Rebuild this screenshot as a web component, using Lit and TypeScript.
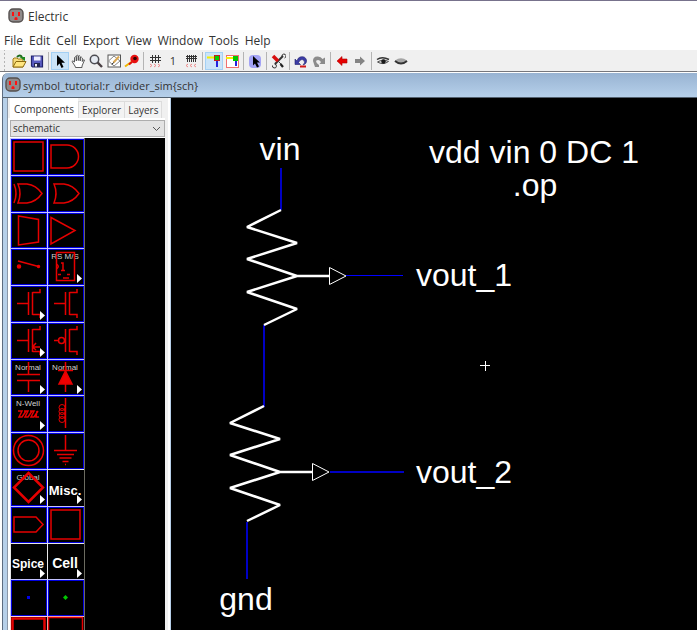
import { LitElement, html, svg, css } from "lit";
import { customElement } from "lit/decorators.js";
import { classMap } from "lit/directives/class-map.js";

const outlet = svg`
  <rect x="1" y="1" width="14" height="13" rx="4" fill="#8f8a8a" stroke="#55504f" stroke-width="1.4"/>
  <rect x="4" y="4" width="2" height="4" fill="#f11"/><rect x="10" y="4" width="2" height="4" fill="#f11"/>
  <path d="M6.500 12v-1.500a1.500 1.500 0 0 1 3 0v1.500z" fill="#f11"/>`;

const icons = {
  open: svg`<path d="M2 6V14H12V6H7L6 5H3Z" fill="#f6dc7c" stroke="#a07c1c"/><path d="M2 14L5 8.500H15L12 14Z" fill="#ffe680" stroke="#8c6a10"/><path d="M6 4Q9 1 11 4" fill="none" stroke="#1c6b1c" stroke-width="2"/><path d="M8.500 4H14V8Z" fill="#1f8a1f"/>`,
  save: svg`<path d="M2.500 3H13.500V14H3.500L2.500 13Z" fill="#5a5cc0" stroke="#22246c" stroke-width="1.200"/><rect x="5" y="3.500" width="6.500" height="4" fill="#eef"/><rect x="5" y="10" width="6" height="4" fill="#23254f"/><rect x="6" y="11" width="2" height="2.500" fill="#eee"/>`,
  select: svg`<path d="M5 2V13L7.500 10.500L9.500 15L11.500 14L9.500 9.800H13Z" fill="#000"/>`,
  hand: svg`<path d="M5 13L2 8.500Q2.500 7 4.500 9V4.500Q5.500 3 6.300 4.500V8V2.800Q7.300 1.500 8.300 3V7.500V3Q9.300 2 10.200 3.500V8V4.500Q11.500 3.500 12.300 5V8.500Q13 6 14.500 7L12 13V14.500H5.500Z" fill="#fff" stroke="#4a4a4a" stroke-width=".9"/>`,
  zoom: svg`<circle cx="6.500" cy="6.500" r="4.200" fill="#e6ebf2" stroke="#4c4c52" stroke-width="1.500"/><path d="M9.700 9.700L14 14" stroke="#4a4044" stroke-width="2.400"/>`,
  outline: svg`<rect x="2" y="2" width="12.500" height="12" fill="#fff" stroke="#555"/><path d="M2.500 8L8 3L14 8L8 13Z" fill="#fff" stroke="#888"/><path d="M7.500 9.500L13 3.500" stroke="#d9a650" stroke-width="2"/><path d="M6 11.500L7.500 9.500" stroke="#000"/>`,
  measure: svg`<path d="M1 13.500L8 8.500" stroke="#efb800" stroke-width="2"/><circle cx="10.500" cy="6" r="4.200" fill="#e81010"/><circle cx="11" cy="5.500" r="1.800" fill="#300"/><path d="M5 11.500L8 9" stroke="#e01010" stroke-width="2"/>`,
  gridCoarse: svg`<path d="M5.500 2V10M8.500 2V10M11.500 2V10M3 4.500H14M3 7.500H14" stroke="#333" fill="none"/><path d="M3 11l2 1.500l-2 1.500M7 11l2 1.500l-2 1.500M11 11l2 1.500l-2 1.500" stroke="#e88" fill="none"/>`,
  gridFine: svg`<path d="M4.500 2V9M6.500 2V9M8.500 2V9M10.500 2V9M12.500 2V9M3 3.500H14M3 5.500H14" stroke="#333" fill="none"/><path d="M5 11l-2 1.500l2 1.500M9 11l-2 1.500l2 1.500M13 11l-2 1.500l2 1.500" stroke="#e88" fill="none"/>`,
  port: svg`<path d="M1 4.500H8" stroke="#f5ee00" stroke-width="2"/><path d="M11 8V14" stroke="#2222e0" stroke-width="2"/><rect x="8.500" y="2.500" width="5" height="5" fill="#00d000" stroke="#c02020"/>`,
  area: svg`<rect x="2.500" y="2.500" width="12" height="12" fill="#fff" stroke="#f07070"/><path d="M2 5H9" stroke="#f5ee00" stroke-width="2"/><path d="M12 8V13" stroke="#2222e0" stroke-width="2"/><rect x="9" y="3" width="5" height="5" fill="#00c800"/>`,
  special: svg`<rect x="2" y="2" width="12" height="13" rx="4" fill="#a3a3f5"/><path d="M6 3V12.500L8 10.500L10 14.500L12 13.500L10 9.500H13Z" fill="#000"/>`,
  tools: svg`<path d="M5 11L13 3" stroke="#333" stroke-width="2"/><path d="M4.500 11A2 2 0 1 1 2.500 12.500M12 3.500A2 2 0 1 1 14.500 5" fill="none" stroke="#333"/><path d="M3 3L8 8" stroke="#d81010" stroke-width="3.500"/><path d="M8 8L11 11" stroke="#444"/><path d="M10.500 11L13 14" stroke="#222" stroke-width="2.200"/>`,
  undo: svg`<path d="M2 6V11.500H7.500L5.500 9.500Q8 5 11 7.500Q12.500 9.500 10 12Q14 11 13.500 7Q12 2.500 7 4Q4.500 5 4 8Z" fill="#3b3ba6" stroke="#23236d" stroke-width=".6"/><path d="M7 13.500H13" stroke="#d01818" stroke-width="2"/>`,
  redo: svg`<path d="M2 8Q2 3 7 3.500Q10 3.800 11.500 6L14 4.500V11H8.500L10 9Q7.500 5.500 5 8Q5 10 8 12V14H4Q3 11 2 8Z" fill="#8c8c8c"/>`,
  back: svg`<path d="M3 8L8 3.500V6H13V10H8V12.500Z" fill="#e60000" stroke="#b00000" stroke-width=".6"/>`,
  forward: svg`<path d="M13 8L8 3.500V6H3V10H8V12.500Z" fill="#858585"/>`,
  eyeOpen: svg`<path d="M2 6.500Q7 3 14 6.500" fill="none" stroke="#333" stroke-width="1.500"/><path d="M2.500 9Q8 12.500 13.500 8.500Q8 5.500 2.500 9Z" fill="#ccc" stroke="#555"/><circle cx="8.500" cy="8.500" r="2.200" fill="#181818"/>`,
  eyeShut: svg`<path d="M2 7.500Q8 3 14 7.500Q12 11 8 11Q4 11 2 7.500Z" fill="#a5a5a5"/><path d="M2 8Q8 13 14 8" fill="none" stroke="#333" stroke-width="2"/>`,
};

type Tool = { label: string; icon?: unknown; on?: boolean };

const toolGroups: Tool[][] = [
  [{ label: "Open library", icon: icons.open }, { label: "Save library", icon: icons.save }],
  [
    { label: "Click, zoom, wire", icon: icons.select, on: true },
    { label: "Pan", icon: icons.hand },
    { label: "Zoom", icon: icons.zoom },
    { label: "Outline edit", icon: icons.outline },
    { label: "Measure", icon: icons.measure },
  ],
  [{ label: "Coarser grid", icon: icons.gridCoarse }, { label: "1" }, { label: "Finer grid", icon: icons.gridFine }],
  [{ label: "Select objects", icon: icons.port, on: true }, { label: "Select area", icon: icons.area }],
  [{ label: "Special select", icon: icons.special }],
  [{ label: "Preferences", icon: icons.tools }],
  [{ label: "Undo", icon: icons.undo }, { label: "Redo", icon: icons.redo }],
  [{ label: "Back", icon: icons.back }, { label: "Forward", icon: icons.forward }],
  [{ label: "Expand", icon: icons.eyeOpen }, { label: "Unexpand", icon: icons.eyeShut }],
];

const more = svg`<path class="more" d="M30 26V35L35 30.500Z"/>`;

type Part = { name: string; art: unknown; kind?: "menu" | "arc" };

const parts: Part[] = [
  { name: "Black box", art: svg`<rect x="4" y="4" width="29" height="29"/>` },
  { name: "And", art: svg`<path d="M4 7H20A11.500 11.500 0 0 1 20 30H4Z"/>` },
  { name: "Xor", art: svg`<path d="M8 9H17Q26 10 32 18.500Q26 27 17 28H8Q12 18.500 8 9ZM4 9Q8 18.500 4 28"/>` },
  { name: "Or", art: svg`<path d="M7 9H17Q26 10 32 18.500Q26 27 17 28H7Q11 18.500 7 9Z"/>` },
  { name: "Mux", art: svg`<path d="M8.500 4L28.500 7.500V30L8.500 33Z"/>` },
  { name: "Buffer", art: svg`<path d="M4 5.500L28 18.500L4 32Z"/>` },
  { name: "Switch", art: svg`<path d="M8 13L28.500 18.500"/><circle class="solid" cx="9" cy="18.500" r="1.500"/><circle class="solid" cx="28.500" cy="18.500" r="1"/>` },
  { name: "Flip-flop", art: svg`<text class="tag" x="18" y="11">RS M/S</text><rect x="9.500" y="4.500" width="18" height="28"/><path d="M9.500 16Q13 18.500 9.500 21M14 22.500H18M16 22V15H14M11 26.500H14M20 26.500H23M16 30H22"/>${more}` },
  { name: "nMOS", art: svg`<path d="M7 18.500H18.500M18.500 7V30M22.500 7V30M22.500 7.500H30V4M22.500 29.500H30V33"/>${more}` },
  { name: "nMOS 4-port", art: svg`<path d="M7 18.500H18.500M18.500 7V30M22.500 7V30M22.500 7.500H30V4M22.500 29.500H30V33"/>` },
  { name: "Transistor", art: svg`<path d="M7 18.500H18.500M18.500 7V30M22.500 7V30M22.500 7.500H30V4M22.500 29.500H30V33M30 25H23M26 21L22.500 25L26 28"/>${more}` },
  { name: "pMOS", art: svg`<path d="M7 18.500H11.500M18.500 7V30M22.500 7V30M22.500 7.500H30V4M22.500 29.500H30V33"/><circle cx="14.500" cy="18.500" r="3"/>` },
  { name: "Capacitor", art: svg`<text class="tag" x="18" y="11">Normal</text><path d="M18.500 3V15.500M7 15.500H30M7 21.500H30M18.500 21.500V33"/>${more}` },
  { name: "Diode", art: svg`<text class="tag" x="18" y="11">Normal</text><path d="M18.500 3V33M11 11.500H26"/><path class="solid" d="M18.500 12L25 25H12Z"/>${more}` },
  { name: "Resistor", art: svg`<text class="tag" x="18" y="11">N-Well</text><path d="M8 16H12L9 22H12L16 16M14 16H18L15 22H18L22 16M20 16H24L21 22H24L28 16M27 16L26 22H29"/>${more}` },
  { name: "Inductor", art: svg`<path d="M18.500 3V33"/><g class="fine"><circle cx="15" cy="12.500" r="3"/><circle cx="15" cy="16.500" r="3"/><circle cx="15" cy="20.500" r="3"/><circle cx="15" cy="24.500" r="3"/></g>` },
  { name: "Power", art: svg`<circle cx="18.500" cy="18.500" r="15"/><circle cx="18.500" cy="18.500" r="10.500"/>` },
  { name: "Ground", art: svg`<path d="M18.500 3V18.500M7 18.500H30M10 22.500H27M12.500 26H24.500M15.500 29.500H21.500M18 32.500H19"/>` },
  { name: "Global", art: svg`<text class="tag" x="18" y="11">Global</text><path class="bold" d="M18.500 4L33 18.500L18.500 33L4 18.500Z"/>${more}` },
  { name: "Misc", kind: "menu", art: svg`<text class="word" x="18" y="26">Misc.</text>${more}` },
  { name: "Off-page", art: svg`<path d="M4 11H26L33 18.500L26 26H4Z"/>` },
  { name: "Cell box", art: svg`<rect x="4" y="4" width="29" height="29"/>` },
  { name: "Spice", kind: "menu", art: svg`<text class="word small" x="18" y="25">Spice</text>${more}` },
  { name: "Cell", kind: "menu", art: svg`<text class="word large" x="18" y="25">Cell</text>${more}` },
  { name: "Wire pin", art: svg`<rect class="wire" x="17" y="17" width="3" height="3"/>` },
  { name: "Bus pin", art: svg`<path class="bus" d="M18.500 16L21 18.500L18.500 21L16 18.500Z"/>` },
  { name: "Bus arc", kind: "arc", art: svg`<rect class="bold" x="2.500" y="2.500" width="32" height="32"/>` },
  { name: "Wire arc", kind: "arc", art: svg`<rect x="1.500" y="1.500" width="34" height="34"/>` },
];

@customElement("component-palette")
export class ComponentPalette extends LitElement {
  static styles = css`
    :host { display: block; flex: 1; background: #000; overflow: hidden; }
    .grid {
      display: grid;
      grid-template-columns: repeat(2, 37px);
      grid-template-rows: repeat(14, 1fr);
      height: 515px;
      width: 74px;
      box-shadow: 1px 0 #6c6c60;
    }
    .cell {
      display: block; min-width: 0; min-height: 0; padding: 0; border: 0; background: #000;
      box-shadow: inset 1px 1px #c4c4ff, inset 2px 2px #0000e0, inset -1px -1px #0000e0;
    }
    .cell.menu { box-shadow: inset 1px 1px #e8e8e8; }
    .cell.arc { box-shadow: inset 1px 1px #ffd0d0; }
    svg { display: block; width: 37px; height: 37px; fill: none; stroke: #e60000; stroke-width: 1.5; }
    text { font-family: "Liberation Sans", Arial, sans-serif; text-anchor: middle; stroke: none; }
    .tag { font-size: 8px; fill: #d0d0d0; }
    .word { font-size: 13px; font-weight: 700; fill: #fff; }
    .small { font-size: 12px; }
    .large { font-size: 14px; }
    .bold { stroke-width: 2.5; }
    .fine { stroke-width: 1; }
    .solid { fill: #f00000; }
    .more { fill: #fff; stroke: none; }
    .wire { fill: #0000e8; stroke: none; }
    .bus { fill: #00c800; stroke: none; }
  `;
  render() {
    return html`<div class="grid">
      ${parts.map(
        (p) => html`<button class=${classMap({ cell: true, menu: p.kind === "menu", arc: p.kind === "arc" })} aria-label=${p.name}>
          <svg viewBox="0 0 37 37">${p.art}</svg>
        </button>`
      )}
    </div>`;
  }
}

const potentiometer = (x: number, y: number) => svg`
  <g transform="translate(${x} ${y})">
    <path class="body" d="M0 0L-34 17L16 33L-34 49L16 66L-34 82L16 99L-17 115M16 66H49"/>
    <path class="tap" d="M48.500 57.500V74.500L65 66Z"/>
  </g>`;

@customElement("schematic-canvas")
export class SchematicCanvas extends LitElement {
  static styles = css`
    :host { display: block; flex: 1; min-width: 0; background: #000; overflow: hidden; }
    svg { display: block; width: 100%; height: 100%; fill: none; }
    text { font: 32px "Liberation Sans", Arial, sans-serif; fill: #fff; }
    .middle { text-anchor: middle; }
    .body { stroke: #fff; stroke-width: 2.5; stroke-linejoin: bevel; }
    .tap { stroke: #fff; stroke-width: 1; }
    .wire { stroke: #0000c4; stroke-width: 2; }
    .thin { stroke: #0000ff; stroke-width: 1; }
    .cursor { stroke: #fff; stroke-width: 1; }
  `;
  render() {
    return html`<svg role="img" aria-label="Resistive divider schematic">
      <path class="wire" d="M110 70V112M93 227V309M76 424V481M159 374H233"/>
      <path class="thin" d="M175 177.500H232"/>
      ${potentiometer(110, 112)} ${potentiometer(93, 308)}
      <path class="cursor" d="M309 267.500H319M314.500 263V273"/>
      <text class="middle" x="109" y="62">vin</text>
      <text class="middle" x="363" y="65">vdd vin 0 DC 1</text>
      <text class="middle" x="364" y="98">.op</text>
      <text x="245" y="188">vout_1</text>
      <text x="245" y="385">vout_2</text>
      <text class="middle" x="75" y="512">gnd</text>
    </svg>`;
  }
}

@customElement("app-root")
export class AppRoot extends LitElement {
  static styles = css`
    :host {
      display: flex; flex-direction: column; height: 100vh; overflow: hidden; box-sizing: border-box;
      border-top: 1px solid #77728c; background: #fff; color: #333;
      font: 12px "Open Sans", "Noto Sans", sans-serif;
    }
    button { font: inherit; color: inherit; border: 0; padding: 0; background: none; }
    .icon { display: block; width: 16px; height: 16px; flex: none; }
    .title { display: flex; align-items: center; gap: 4px; height: 30px; padding-left: 8px; flex: none; }
    .menus { display: flex; align-items: center; gap: 6px; height: 19px; padding: 0 4px; flex: none; }
    .tools {
      display: flex; align-items: center; height: 22px; padding-left: 10px; flex: none;
      background: #f0f0f0 radial-gradient(circle, #b4b4b4 1px, transparent 1px) 3px 2px / 3px 4px repeat-y;
      border-bottom: 1px solid #77777c; box-sizing: border-box;
    }
    .group { display: flex; }
    .group + .group { border-left: 1px solid #b4b4b4; margin-left: 2px; padding-left: 2px; }
    .tool { display: grid; place-items: center; width: 18px; height: 18px; font-size: 11px; }
    .tool.on { background: #cbe4f8; box-shadow: inset 0 0 0 1px #a4d0f4; }
    .frame {
      display: flex; flex-direction: column; flex: 1; min-height: 0;
      margin: 1px 0 0 2px; border-left: 1px solid #5d6c80; border-radius: 6px 0 0 0;
      background: #b7d0e9;
    }
    .caption {
      display: flex; align-items: center; gap: 2px; height: 24px; padding-left: 2px; flex: none; font-size: 11px;
      background: linear-gradient(#98b3d2, #b6d0ea); border-bottom: 1px solid #53616f; border-radius: 6px 0 0 0;
    }
    .body { display: flex; flex: 1; min-height: 0; padding-left: 4px; }
    .side {
      display: flex; flex-direction: column; width: 157px; flex: none; background: #f0f0f0;
      border-left: 1px solid #8c98a8; border-right: 2px solid #fff; padding-right: 3px; margin-right: 1px;
    }
    .tabs { display: flex; align-items: flex-end; height: 20px; padding-left: 2px; font-size: 10px; }
    .tab { height: 17px; padding: 0 3px; border: 1px solid #dcdcdc; border-bottom: 0; background: #f3f3f3; }
    .tab + .tab + .tab { border-left: 0; }
    .tab.on { height: 20px; background: #fff; border-color: #fff; }
    .pane { display: flex; flex-direction: column; flex: 1; min-height: 0; padding: 2px 0 0 2px; background: #fff; }
    .picker { display: grid; height: 17px; margin-bottom: 1px; }
    .picker > * { grid-area: 1 / 1; }
    select {
      appearance: none; font: inherit; font-size: 10px; color: inherit; padding: 0 2px; margin: 0;
      background: #e3e3e3; border: 1px solid #adadad; border-radius: 0; height: 17px; line-height: 15px;
    }
    .chevron { place-self: center end; width: 9px; height: 6px; margin-right: 4px; pointer-events: none; fill: none; stroke: #555; }
  `;
  render() {
    return html`
      <header class="title"><svg class="icon" viewBox="0 0 16 16">${outlet}</svg><span>Electric</span></header>
      <nav class="menus">
        ${["File", "Edit", "Cell", "Export", "View", "Window", "Tools", "Help"].map((m) => html`<button>${m}</button>`)}
      </nav>
      <div class="tools" role="toolbar">
        ${toolGroups.map(
          (g) => html`<div class="group">
            ${g.map(
              (t) => html`<button class=${classMap({ tool: true, on: !!t.on })} aria-label=${t.label}>
                ${t.icon ? html`<svg class="icon" viewBox="0 0 16 16">${t.icon}</svg>` : t.label}
              </button>`
            )}
          </div>`
        )}
      </div>
      <section class="frame">
        <div class="caption">
          <svg class="icon" viewBox="0 0 16 16">${outlet}</svg><span>symbol_tutorial:r_divider_sim{sch}</span>
        </div>
        <div class="body">
          <aside class="side">
            <div class="tabs" role="tablist">
              <button class="tab on" role="tab">Components</button>
              <button class="tab" role="tab">Explorer</button>
              <button class="tab" role="tab">Layers</button>
            </div>
            <div class="pane">
              <div class="picker">
                <select aria-label="Technology"><option>schematic</option></select>
                <svg class="chevron" viewBox="0 0 9 6"><path d="M1 1L4.500 4.500L8 1"/></svg>
              </div>
              <component-palette></component-palette>
            </div>
          </aside>
          <schematic-canvas></schematic-canvas>
        </div>
      </section>
    `;
  }
}
